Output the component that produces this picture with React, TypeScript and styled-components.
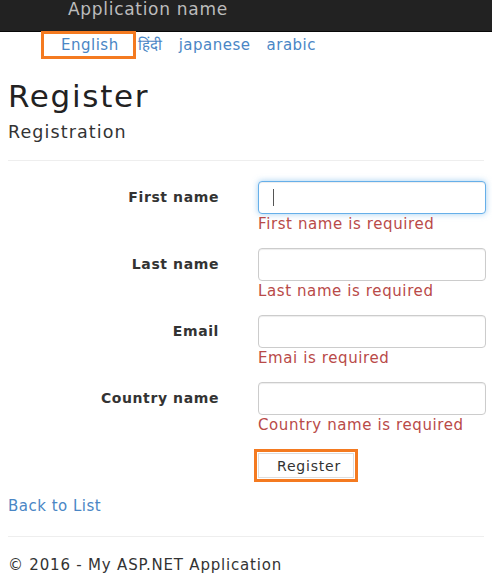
import React from "react";
import styled, { createGlobalStyle } from "styled-components";

const Global = createGlobalStyle`
  html, body { margin: 0; padding: 0; background: #fff; }
  body { font-family: "DejaVu Sans", "Liberation Sans", sans-serif; color: #333; }
  * { box-sizing: border-box; }
`;

const Navbar = styled.header`
  height: 33px;
  background: #222;
  border-bottom: 1px solid #080808;
  padding-left: 68px;
`;

const Brand = styled.a`
  display: block;
  margin-top: -1px;
  font-size: 17px;
  letter-spacing: 0.7px;
  line-height: 20px;
  color: #bcbcbc;
  text-decoration: none;
`;

const Langs = styled.nav`
  display: flex;
  align-items: center;
  padding-left: 41px;
  height: 28px;
  margin-top: -1px;
`;

const LangLink = styled.a<{ $boxed?: boolean }>`
  font-size: 15px;
  letter-spacing: 0.5px;
  line-height: 22px;
  color: #4a86c5;
  text-decoration: none;
  margin-right: ${(p) => (p.$boxed ? "2px" : "16px")};
  border: ${(p) => (p.$boxed ? "3px solid #f47a20" : "none")};
  padding: ${(p) => (p.$boxed ? "0 14px 0 17px" : "0")};
`;

const Container = styled.main`
  padding: 0 8px;
`;

const Title = styled.h2`
  margin: 20px 0 0;
  font-size: 31px;
  letter-spacing: 1.7px;
  line-height: 34px;
  font-weight: normal;
  color: #222;
`;

const Subtitle = styled.h4`
  margin: 9px 0 0;
  font-size: 17.5px;
  letter-spacing: 1.1px;
  line-height: 20px;
  font-weight: normal;
  color: #333;
`;

const Rule = styled.hr`
  margin: 18px 0 0;
  border: 0;
  border-top: 1px solid #eee;
`;

const Form = styled.form`
  margin-top: 20px;
  display: flex;
  flex-direction: column;
`;

const Row = styled.div`
  display: grid;
  grid-template-columns: 211px 228px;
  column-gap: 39px;
  margin-bottom: 14px;
`;

const Label = styled.label`
  text-align: right;
  font-weight: bold;
  font-size: 14px;
  letter-spacing: 0.6px;
  line-height: 33px;
  color: #333;
`;

const Field = styled.div`
  position: relative;
  display: flex;
  flex-direction: column;
`;

const Input = styled.input<{ $focused?: boolean }>`
  height: 33px;
  width: 228px;
  border-radius: 4px;
  border: 1px solid ${(p) => (p.$focused ? "#66afe9" : "#ccc")};
  box-shadow: ${(p) =>
    p.$focused
      ? "inset 0 1px 1px rgba(0,0,0,.075), 0 0 6px rgba(102,175,233,.6)"
      : "inset 0 1px 1px rgba(0,0,0,.075)"};
  padding: 0 12px;
  font-family: inherit;
  font-size: 14px;
  outline: none;
  background: #fff;
`;

const Caret = styled.span`
  position: absolute;
  left: 15px;
  top: 8px;
  width: 1px;
  height: 17px;
  background: #555;
`;

const Error = styled.span`
  font-size: 15px;
  letter-spacing: 0.6px;
  line-height: 20px;
  color: #b94a48;
`;

const ButtonRow = styled.div`
  display: grid;
  grid-template-columns: 211px auto;
  column-gap: 39px;
  margin-top: 4px;
`;

const Button = styled.button`
  justify-self: start;
  height: 25px;
  padding: 0 12px 0 18px;
  background: #fff;
  border: 1px solid #ddd;
  outline: 3px solid #f47a20;
  outline-offset: 1px;
  font-family: inherit;
  font-size: 14px;
  letter-spacing: 0.8px;
  color: #333;
`;

const BackLink = styled.a`
  display: block;
  margin-top: 18px;
  font-size: 15px;
  letter-spacing: 0.5px;
  line-height: 20px;
  color: #4a86c5;
  text-decoration: none;
`;

const FooterRule = styled.hr`
  margin: 20px 0 0;
  border: 0;
  border-top: 1px solid #eee;
`;

const Footer = styled.footer`
  margin-top: 18px;
  font-size: 15px;
  letter-spacing: 0.8px;
  line-height: 20px;
  color: #333;
`;

const fields = [
  { label: "First name", error: "First name is required", focused: true },
  { label: "Last name", error: "Last name is required" },
  { label: "Email", error: "Emai is required" },
  { label: "Country name", error: "Country name is required" },
];

export default function App() {
  return (
    <>
      <Global />
      <Navbar>
        <Brand href="#">Application name</Brand>
      </Navbar>
      <Langs>
        <LangLink href="#" $boxed>English</LangLink>
        <LangLink href="#">हिंदी</LangLink>
        <LangLink href="#">japanese</LangLink>
        <LangLink href="#">arabic</LangLink>
      </Langs>
      <Container>
        <Title>Register</Title>
        <Subtitle>Registration</Subtitle>
        <Rule />
        <Form onSubmit={(e) => e.preventDefault()}>
          {fields.map((f) => (
            <Row key={f.label}>
              <Label>{f.label}</Label>
              <Field>
                <Input $focused={f.focused} />
                {f.focused && <Caret />}
                <Error>{f.error}</Error>
              </Field>
            </Row>
          ))}
          <ButtonRow>
            <span />
            <Button type="submit">Register</Button>
          </ButtonRow>
        </Form>
        <BackLink href="#">Back to List</BackLink>
        <FooterRule />
        <Footer>© 2016 - My ASP.NET Application</Footer>
      </Container>
    </>
  );
}
